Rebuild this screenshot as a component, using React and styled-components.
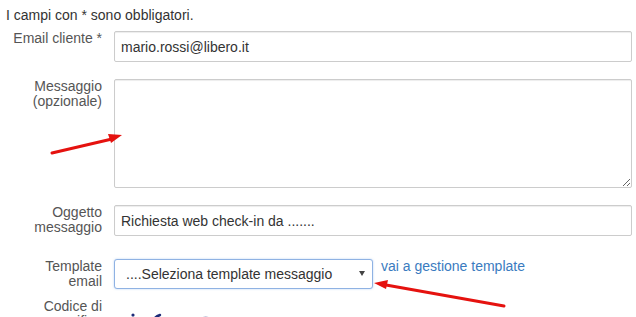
import React from 'react'
import styled, { createGlobalStyle } from 'styled-components'

const GlobalStyle = createGlobalStyle`
    html, body {
        margin: 0;
        padding: 0;
        background: #fff;
        overflow: hidden;
    }
    body {
        font-family: 'Liberation Sans', Arial, sans-serif;
        font-size: 14px;
        color: #333;
    }
`

const Page = styled.div`
    position: relative;
    padding: 5px 4px 0 6px;
`

const Note = styled.p`
    margin: 0 0 6px;
    line-height: 20px;
    color: #333;
`

const Form = styled.form`
    display: grid;
    grid-template-columns: 96px 1fr;
    column-gap: 12px;
`

const Label = styled.label`
    text-align: right;
    line-height: 15px;
    color: #555;
    margin-bottom: ${p => p.$gap || 0}px;
`

const Field = styled.div`
    display: flex;
    align-items: flex-start;
    gap: 8px;
    margin-bottom: ${p => p.$gap || 0}px;
`

const Input = styled.input`
    box-sizing: border-box;
    width: 100%;
    height: 31px;
    padding: 0 6px;
    border: 1px solid #ccc;
    border-radius: 2px;
    box-shadow: inset 0 1px 1px rgba(0, 0, 0, 0.075);
    font: inherit;
    color: #333;
    outline: none;
`

const TextArea = styled.textarea`
    box-sizing: border-box;
    display: block;
    width: 100%;
    height: 109px;
    padding: 6px;
    border: 1px solid #ccc;
    border-radius: 2px;
    box-shadow: inset 0 1px 1px rgba(0, 0, 0, 0.075);
    font: inherit;
    outline: none;
`

const SelectWrap = styled.div`
    position: relative;
    width: 259px;
    flex: none;

    &::after {
        content: '';
        position: absolute;
        right: 8px;
        top: 12px;
        border-left: 3px solid transparent;
        border-right: 3px solid transparent;
        border-top: 5px solid #444;
    }
`

const Select = styled.select`
    appearance: none;
    box-sizing: border-box;
    width: 100%;
    height: 30px;
    padding: 0 20px 0 11px;
    border: 1px solid #8fb2e3;
    border-radius: 3px;
    box-shadow: 0 0 2px rgba(102, 160, 233, 0.5);
    background: #fff;
    font: inherit;
    color: #333;
    outline: none;
`

const TemplateLink = styled.a`
    line-height: 15px;
    color: #3a7bc0;
    text-decoration: none;
    white-space: nowrap;
`

const Captcha = styled.svg`
    display: block;
    margin-top: 4px;
`

const Overlay = styled.svg`
    position: absolute;
    left: 0;
    top: 0;
    pointer-events: none;
`

const App = () => {
    return (
        <Page>
            <GlobalStyle />
            <Note>I campi con * sono obbligatori.</Note>
            <Form>
                <Label $gap={17}>Email cliente *</Label>
                <Field $gap={17}>
                    <Input defaultValue='mario.rossi@libero.it' />
                </Field>

                <Label $gap={17}>Messaggio<br />(opzionale)</Label>
                <Field $gap={17}>
                    <TextArea />
                </Field>

                <Label $gap={23}>Oggetto<br />messaggio</Label>
                <Field $gap={23}>
                    <Input defaultValue='Richiesta web check-in da .......' />
                </Field>

                <Label $gap={10}>Template<br />email</Label>
                <Field $gap={10}>
                    <SelectWrap>
                        <Select defaultValue=''>
                            <option value=''>....Seleziona template messaggio</option>
                        </Select>
                    </SelectWrap>
                    <TemplateLink href='#'>vai a gestione template</TemplateLink>
                </Field>

                <Label>Codice di<br />verifica</Label>
                <Field>
                    <Captcha width='120' height='30' viewBox='0 0 120 30'>
                        <g fill='none' stroke='#1c2b78' strokeWidth='2.4' strokeLinecap='round'>
                            <circle cx='19' cy='12' r='1.6' fill='#1c2b78' stroke='none' />
                            <path d='M15 17 Q19 15 24 16 M19 15 L19 24' />
                            <path d='M38 20 Q40 14 46 12 M37 17 L44 15 M40 18 L38 26' />
                            <path d='M78 19 Q82 15 87 16 Q90 18 86 21 M86 16 Q92 14 97 16 Q100 19 95 22' />
                        </g>
                    </Captcha>
                </Field>
            </Form>

            <Overlay width='636' height='317' viewBox='0 0 636 317'>
                <g stroke='#e5120f' strokeWidth='3' strokeLinecap='round'>
                    <line x1='52' y1='153' x2='112' y2='139' />
                    <line x1='504' y1='306' x2='386' y2='285' />
                </g>
                <g fill='#e5120f'>
                    <polygon points='122,135 108,134 111,143' />
                    <polygon points='374,283 388,280 386,289' />
                </g>
            </Overlay>
        </Page>
    )
}

export default App
